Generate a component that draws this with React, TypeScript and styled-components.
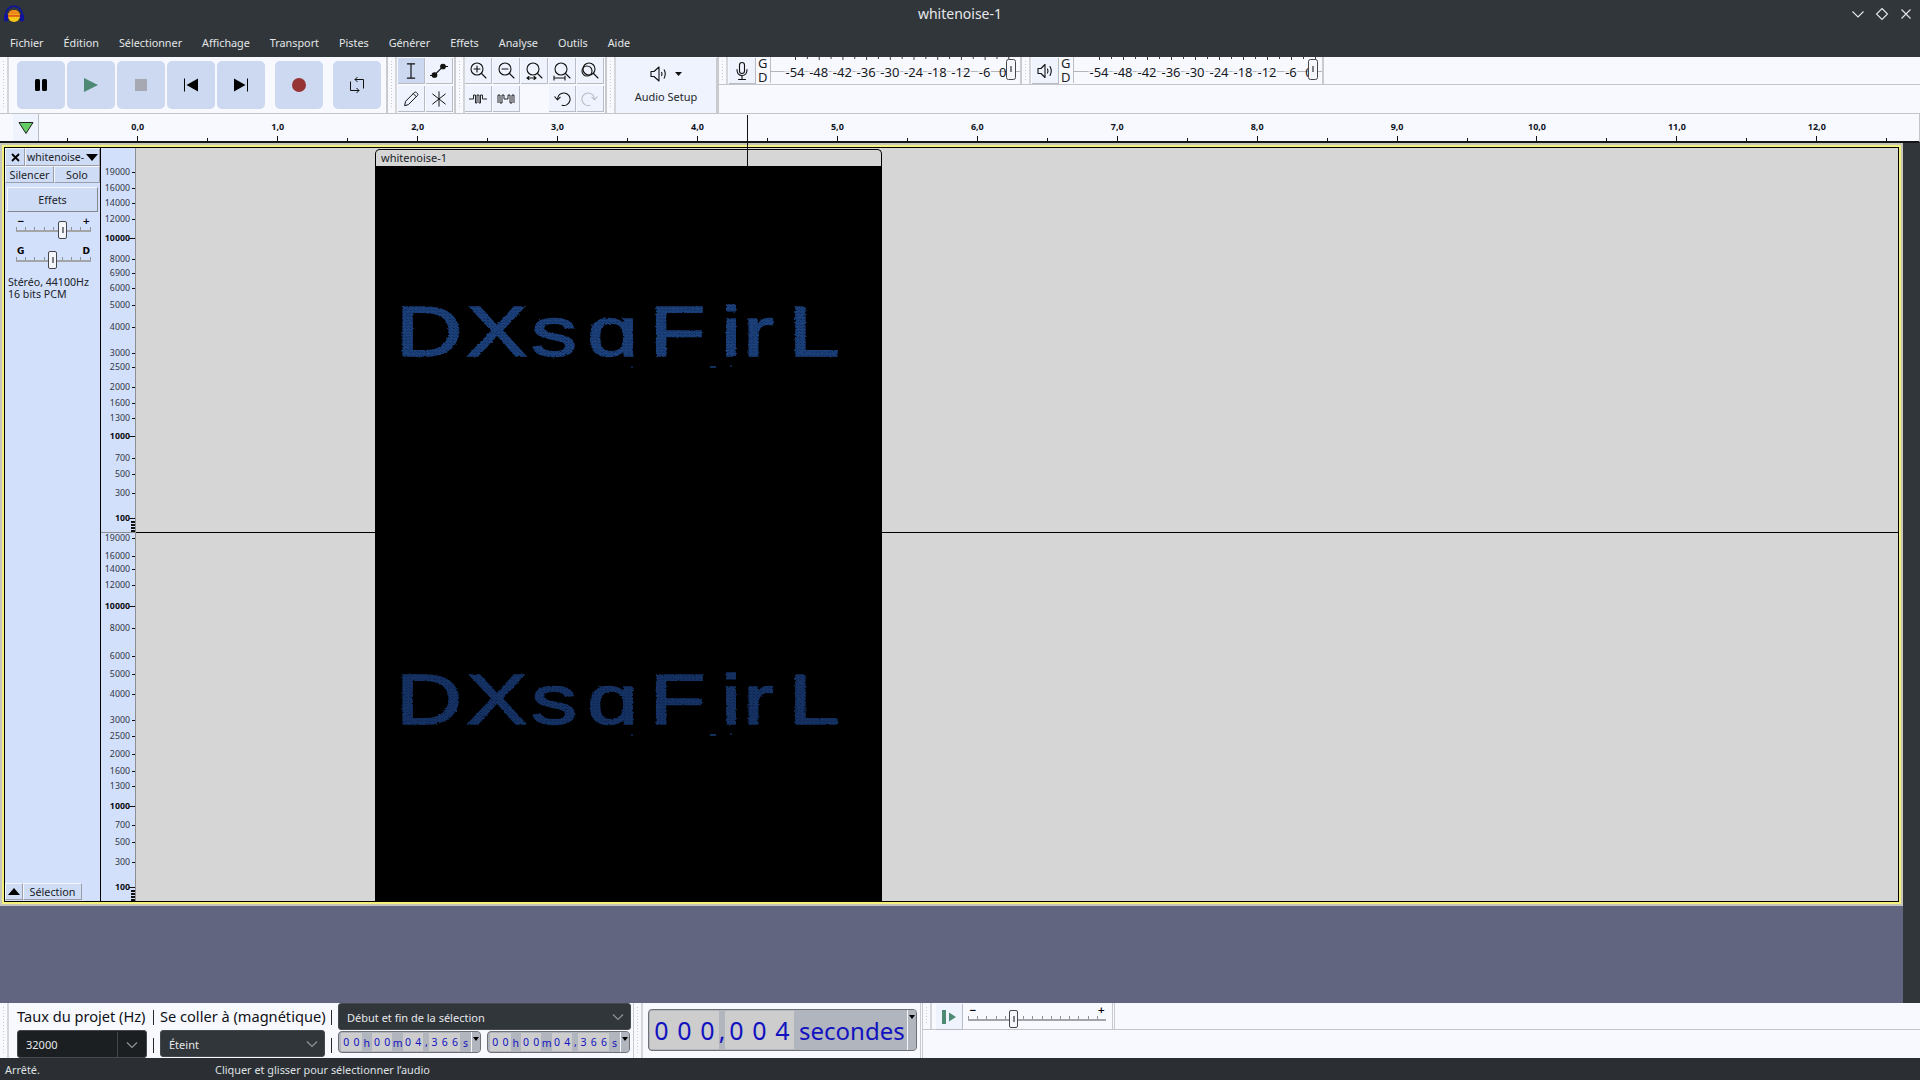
import React from 'react';
import styled, { createGlobalStyle } from 'styled-components';

const GlobalStyle = createGlobalStyle`
  html, body { margin: 0; padding: 0; background: #31363a; }
  * { box-sizing: border-box; }
  body { font-family: "Noto Sans", "Liberation Sans", sans-serif; }
`;

const Shell = styled.div`
  position: relative;
  width: 1920px;
  height: 1080px;
  display: flex;
  flex-direction: column;
  overflow: hidden;
  background: #31363a;
`;

/* ---------- title + menu ---------- */

const TitleBar = styled.div`
  height: 28px;
  display: grid;
  grid-template-columns: 1fr auto 1fr;
  align-items: center;
  padding: 0 7px 0 4px;
  color: #e6e8ea;
`;

const Title = styled.div`
  font-size: 14px;
  margin-left: 3px;
  padding-bottom: 1px;
`;

const WindowButtons = styled.div`
  display: flex;
  justify-content: flex-end;
  gap: 10px;
`;

const MenuBar = styled.div`
  height: 29px;
  display: flex;
  align-items: center;
  padding-bottom: 1px;
`;

const MenuItem = styled.span`
  padding: 0 10px;
  font-size: 10.8px;
  color: #e4e6e8;
`;

/* ---------- top toolbars ---------- */

const TopDock = styled.div`
  height: 57px;
  display: flex;
  background: #f7f9ff;
  border-bottom: 1px solid #c4c5c8;
`;

const Block = styled.div`
  display: flex;
  height: 56px;
  border-right: 2px solid #c9cacd;
  flex-shrink: 0;
`;

const Grip = styled.div`
  width: 9px;
  flex-shrink: 0;
  padding: 4px 3px 4px 3px;
  background: repeating-linear-gradient(to bottom, #c9cbd2 0 1px, transparent 1px 3px) content-box;
  border-right: 2px solid #d5d6d9;
`;

const TransportRow = styled.div`
  display: flex;
  align-items: center;
  gap: 2px;
  padding: 0 5px 0 8px;
`;

const TransportButton = styled.div<{ $gap?: boolean }>`
  width: 48px;
  height: 48px;
  margin-left: ${(p) => (p.$gap ? 8 : 0)}px;
  border-radius: 5px;
  background: #cdd9f0;
  display: flex;
  align-items: center;
  justify-content: center;
`;

const ToolGrid = styled.div<{ $cols: number }>`
  display: grid;
  grid-template-columns: repeat(${(p) => p.$cols}, 27px);
  grid-auto-rows: 26px;
  gap: 2px 1px;
  padding: 1px 1px 0 ${(p) => (p.$cols === 2 ? 1 : 0)}px;
`;

const ToolButton = styled.div<{ $active?: boolean; $empty?: boolean }>`
  display: flex;
  align-items: center;
  justify-content: center;
  padding-top: 1px;
  background: ${(p) => (p.$empty ? 'transparent' : p.$active ? '#cbd8ef' : '#eef3fd')};
  border-right: 1px solid ${(p) => (p.$empty ? 'transparent' : '#b9bcc4')};
  border-bottom: 1px solid ${(p) => (p.$empty ? 'transparent' : '#b9bcc4')};
`;

const SetupButton = styled.div`
  width: 101px;
  height: 55px;
  margin-top: 1px;
  background: #eef3fd;
  border-right: 1px solid #c9cacd;
  display: flex;
  flex-direction: column;
  align-items: center;
  gap: 5px;
  padding-top: 6px;
  font-size: 11px;
  color: #26282c;
`;

const MeterDock = styled.div`
  flex: 1;
  display: flex;
  flex-direction: column;
`;

const MeterRow = styled.div`
  height: 28px;
  display: flex;
  border-bottom: 1px solid #c4c5c8;
`;

const MeterBlock = styled.div<{ $width: number }>`
  width: ${(p) => p.$width}px;
  height: 27px;
  display: flex;
  border-right: 2px solid #c9cacd;
  flex-shrink: 0;
`;

const MeterButton = styled.div<{ $left?: number }>`
  width: 27px;
  height: 26px;
  margin: 1px 0 0 ${(p) => p.$left ?? 1}px;
  background: #eef3fd;
  border-right: 1px solid #b9bcc4;
  border-bottom: 1px solid #b9bcc4;
  display: flex;
  align-items: center;
  justify-content: center;
`;

const ChannelLetters = styled.div`
  width: 14px;
  padding-left: 2px;
  display: flex;
  flex-direction: column;
  font-size: 13px;
  line-height: 13.5px;
  color: #1c1e22;
`;

/* ---------- ruler ---------- */

const RulerBar = styled.div`
  height: 29px;
  display: flex;
  background: #f7f9ff;
  border-bottom: 2px solid #141517;
  border-right: 1px solid #c4c5c8;
  padding-left: 13px;
`;

const PlayRegionButton = styled.div`
  width: 26px;
  height: 27px;
  background: #eef3fd;
  border-right: 1px solid #b9bcc4;
  display: flex;
  align-items: center;
  justify-content: center;
`;

const PlayCursor = styled.div`
  position: absolute;
  left: 747px;
  top: 115px;
  width: 1px;
  height: 51px;
  background: #111;
  z-index: 3;
`;

/* ---------- tracks ---------- */

const Middle = styled.div`
  flex: 1;
  display: flex;
  min-height: 0;
`;

const Workspace = styled.div`
  width: 1903px;
  display: flex;
  flex-direction: column;
  background: #62657f;
`;

const FrameOuter = styled.div`
  height: 763px;
  border: 2px solid #c6c6bd;
`;

const FrameInner = styled.div`
  height: 100%;
  border: 2px solid #f4f07c;
`;

const TrackGrid = styled.div`
  height: 100%;
  display: flex;
  border: 1px solid #000;
  background: #d6d6d6;
`;

const ControlPanel = styled.div`
  width: 96px;
  flex-shrink: 0;
  display: flex;
  flex-direction: column;
  background: #d2e0fc;
  border-right: 1px solid #000;
  font-size: 10.8px;
  color: #202226;
`;

const PanelRow = styled.div`
  display: flex;
`;

const PanelCell = styled.div<{ $flex?: number; $width?: number; $height: number }>`
  ${(p) => (p.$width ? `width: ${p.$width}px;` : `flex: ${p.$flex ?? 1};`)}
  height: ${(p) => p.$height}px;
  background: #cedcf6;
  border-right: 1px solid #9b9ea6;
  border-bottom: 1px solid #9b9ea6;
  border-top: 1px solid #f3f6fd;
  border-left: 1px solid #f3f6fd;
  display: flex;
  align-items: center;
  justify-content: center;
  white-space: nowrap;
  overflow: hidden;
`;

const NameCell = styled(PanelCell)`
  justify-content: flex-start;
  padding-left: 1px;
  gap: 2px;
  font-size: 10.5px;
`;

const EffectsButton = styled.div`
  height: 25px;
  margin: 4px 2px 0 2px;
  background: #cedcf6;
  border-right: 1px solid #85878d;
  border-bottom: 1px solid #85878d;
  border-top: 1px solid #f3f6fd;
  border-left: 1px solid #f3f6fd;
  display: flex;
  align-items: center;
  justify-content: center;
`;

const SliderGroup = styled.div<{ $top: number; $width: number; $left: number }>`
  width: ${(p) => p.$width}px;
  margin: ${(p) => p.$top}px 0 0 ${(p) => p.$left}px;
  flex-shrink: 0;
`;

const SliderLabels = styled.div`
  height: 9px;
  padding: 0 1px;
  display: flex;
  justify-content: space-between;
  align-items: center;
  font-family: "DejaVu Sans", sans-serif;
  font-weight: 700;
  font-size: 9px;
  line-height: 9px;
  color: #000;
`;

const SliderBox = styled.div`
  position: relative;
  height: 18px;
  margin-top: -5px;
`;

const SliderTicks = styled.div`
  position: absolute;
  left: 0;
  right: 0;
  top: 6px;
  height: 4px;
  background: repeating-linear-gradient(to right, #8f9196 0 1px, transparent 1px 9.2px);
`;

const SliderTrack = styled.div`
  position: absolute;
  left: 0;
  right: 0;
  top: 9px;
  height: 2px;
  background: #a3a4a6;
`;

const SliderThumb = styled.div<{ $left: number }>`
  position: absolute;
  left: ${(p) => p.$left}px;
  top: 0;
  width: 9px;
  height: 18px;
  background: #f4f6fb;
  border: 1px solid #45474c;
  border-radius: 2px;
  &::after {
    content: '';
    position: absolute;
    left: 2.5px;
    top: 5px;
    width: 2px;
    height: 6px;
    background: #7f8186;
  }
`;

const TrackInfo = styled.div`
  margin: 7px 0 0 3px;
  line-height: 12px;
  font-size: 10.6px;
`;

const SelectRow = styled.div`
  margin-top: auto;
  margin-bottom: 1px;
  display: flex;
`;

const ScaleColumn = styled.div`
  width: 35px;
  flex-shrink: 0;
  background: #d2e0fc;
  border-right: 1px solid #8d8e92;
`;

const Canvas = styled.div`
  position: relative;
  flex: 1;
  padding: 1px 0 0 239px;
  background: #d6d6d6;
`;

const ChannelLine = styled.div`
  position: absolute;
  left: 0;
  right: 0;
  top: 384px;
  height: 1px;
  background: #000;
`;

const Clip = styled.div`
  width: 507px;
  height: 100%;
  display: flex;
  flex-direction: column;
`;

const ClipHeader = styled.div`
  height: 18px;
  padding: 0 0 1px 5px;
  display: flex;
  align-items: center;
  background: #d6d6d6;
  border: 1px solid #000;
  border-bottom: 0;
  border-radius: 5px 5px 0 0;
  font-size: 11px;
  color: #202226;
`;

const ClipBody = styled.div`
  flex: 1;
  background: #000;
`;

const ScrollColumn = styled.div`
  flex: 1;
  background: #31363a;
`;

/* ---------- bottom toolbars ---------- */

const BottomDock = styled.div`
  height: 55px;
  display: flex;
  background: #f7f9ff;
`;

const SelectionBlock = styled.div`
  width: 634px;
  display: flex;
  padding-right: 3px;
  border-right: 1px solid #c9cacd;
  flex-shrink: 0;
`;

const SelectionColumn = styled.div<{ $width: number; $left: number }>`
  width: ${(p) => p.$width}px;
  margin-left: ${(p) => p.$left}px;
  display: flex;
  flex-direction: column;
  flex-shrink: 0;
`;

const FieldLabel = styled.div`
  height: 27px;
  padding-bottom: 1px;
  display: flex;
  align-items: center;
  font-size: 14.6px;
  color: #101114;
  white-space: nowrap;
`;

const Dividers = styled.div`
  width: 1px;
  margin-left: 6px;
  padding: 7px 0 5px;
  display: flex;
  flex-direction: column;
  justify-content: space-between;
  flex-shrink: 0;
`;

const DividerTick = styled.div`
  height: 15px;
  background: #26282c;
`;

const Combo = styled.div<{ $dark?: boolean }>`
  height: ${(p) => (p.$dark ? 28 : 27)}px;
  display: flex;
  align-items: center;
  justify-content: space-between;
  padding: 1px ${(p) => (p.$dark ? 0 : 5)}px 0 8px;
  background: ${(p) => (p.$dark ? '#1c1f22' : '#31363a')};
  border: 1px solid #454a4f;
  border-radius: 3px;
  font-size: 11px;
  color: #e6e8ea;
`;

const ComboArrow = styled.div`
  width: 29px;
  height: 100%;
  border-left: 1px solid #43474c;
  display: flex;
  align-items: center;
  justify-content: center;
`;

const TimeFields = styled.div`
  height: 28px;
  display: flex;
  gap: 6px;
  padding-top: 1px;
`;

const TimeField = styled.div<{ $large?: boolean }>`
  position: relative;
  height: ${(p) => (p.$large ? 42 : 22)}px;
  width: ${(p) => (p.$large ? 269 : 143)}px;
  display: flex;
  align-items: stretch;
  padding: ${(p) => (p.$large ? '1px 0 1px 1px' : '1px 0 1px 2px')};
  background: #b1b5bd;
  border: 1px solid #6e7075;
  border-radius: 4px;
  color: #1212c0;
  font-size: ${(p) => (p.$large ? 25 : 10.5)}px;
  line-height: 1;
`;

const TimeCell = styled.span<{ $large?: boolean; $lit?: boolean; $width?: number; $low?: boolean }>`
  width: ${(p) => p.$width ?? (p.$large ? 23 : 10.3)}px;
  padding-top: ${(p) => (p.$low ? 3 : 0)}px;
  display: flex;
  align-items: center;
  justify-content: center;
  background: ${(p) => (p.$lit ? '#cdcdcd' : 'transparent')};
`;

const TimeUnit = styled.span`
  margin-left: 5px;
  padding-top: 1px;
  display: flex;
  align-items: center;
  font-size: 24px;
`;

const TimeDrop = styled.div`
  position: absolute;
  right: 0;
  top: 0;
  bottom: 0;
  width: 9px;
  border-left: 1px solid #f4f6fb;
  background: #b1b5bd;
  border-radius: 0 3px 3px 0;
  &::after {
    content: '';
    position: absolute;
    left: 1px;
    top: 5px;
    border-left: 3.5px solid transparent;
    border-right: 3.5px solid transparent;
    border-top: 4px solid #000;
  }
`;

const TimeBlock = styled.div`
  width: 289px;
  display: flex;
  flex-shrink: 0;
  border-right: 3px double #c9cacd;
`;

const BigTimeWrap = styled.div`
  padding: 6px 0 0 5px;
`;

const SpeedDock = styled.div`
  flex: 1;
  display: flex;
  flex-direction: column;
`;

const SpeedRow = styled.div`
  height: 27px;
  display: flex;
  border-bottom: 1px solid #c4c5c8;
`;

const SpeedBlock = styled.div`
  width: 192px;
  display: flex;
  flex-shrink: 0;
  border-right: 3px double #c9cacd;
`;

const SpeedSlider = styled.div`
  padding: 3px 0 0 5px;
`;

const StatusBar = styled.div`
  height: 22px;
  display: flex;
  align-items: center;
  padding-top: 1px;
  background: #2b2e33;
  color: #dfe1e3;
  font-size: 10.9px;
`;

const StatusLeft = styled.div`
  width: 215px;
  padding-left: 5px;
`;

/* ---------- drawings ---------- */

const Stroke = ({ size = 20, sw = 1.3, color = '#111', children }: { size?: number; sw?: number; color?: string; children: React.ReactNode }) => (
  <svg width={size} height={size} viewBox="0 0 20 20" fill="none" stroke={color} strokeWidth={sw} strokeLinecap="round" strokeLinejoin="round">
    {children}
  </svg>
);

const Logo = () => (
  <svg width="20" height="18" viewBox="0 0 20 18">
    <path d="M1.5 12 C1.5 -2.5 18.5 -2.5 18.5 12" fill="none" stroke="#10149c" strokeWidth="1.7" />
    <rect x="0" y="9" width="4" height="7.5" rx="1.8" fill="#10149c" />
    <rect x="16" y="9" width="4" height="7.5" rx="1.8" fill="#10149c" />
    <circle cx="10" cy="11" r="6" fill="#f5c518" />
    <path d="M4.2 9.5 A6 6 0 0 1 15.8 9.5 Z" fill="#ee8a1c" />
    <rect x="4" y="10.3" width="12" height="1.3" fill="#d8301c" />
  </svg>
);

const SpeakerIcon = ({ size = 20 }: { size?: number }) => (
  <Stroke size={size} sw={1.1}>
    <path d="M3 7.5 H6 L10 3.5 V16.5 L6 12.5 H3 Z" />
    <path d="M12.5 8 Q13.5 10 12.5 12" />
    <path d="M15 5.5 Q17.5 10 15 14.5" />
  </Stroke>
);

const ZoomGlass = ({ children }: { children?: React.ReactNode }) => (
  <Stroke size={20} sw={1.1}>
    <circle cx="9" cy="8" r="6" />
    <path d="M13.5 12.5 L18 17" />
    {children}
  </Stroke>
);

const RulerSvg = () => {
  const marks = Array.from({ length: 27 }, (_, i) => i - 1);
  return (
    <svg width="1880" height="27" style={{ display: 'block' }}>
      {marks.map((m) => {
        const x = 98.3 + m * 69.96;
        const major = m % 2 === 0;
        return (
          <g key={m}>
            <rect x={Math.round(x)} y={major ? 22 : 24} width="1" height={major ? 5 : 3} fill="#111" />
            {major && (
              <text x={x + 0.5} y="16" textAnchor="middle" fontSize="9" fontWeight="700" fontFamily="Noto Sans" fill="#10131c">
                {`${m / 2},0`}
              </text>
            )}
          </g>
        );
      })}
    </svg>
  );
};

const Meter = ({ width, start, step }: { width: number; start: number; step: number }) => {
  const labels = ['-54', '-48', '-42', '-36', '-30', '-24', '-18', '-12', '-6'];
  return (
    <svg width={width} height="27" style={{ display: 'block', flexShrink: 0 }}>
      <rect x="0" y="0" width="1" height="26" fill="#bcbdc0" />
      <rect x="0" y="14" width={width} height="1" fill="#b4b5b8" />
      {Array.from({ length: 19 }, (_, i) => (
        <rect key={i} x={start + (i * step) / 2} y="0" width="1" height={i % 2 ? 2 : 3} fill="#3a3c40" />
      ))}
      {labels.map((l, i) => (
        <text
          key={l}
          x={start + i * step}
          y="20"
          textAnchor="middle"
          fontSize="13"
          fontFamily="Noto Sans"
          fill="#16181c"
          stroke="#f7f9ff"
          strokeWidth="3"
          paintOrder="stroke"
        >
          {l}
        </text>
      ))}
      <text x={start + 8 * step + 18} y="20" textAnchor="middle" fontSize="13" fontFamily="Noto Sans" fill="#16181c">
        0
      </text>
      <rect x={width - 13.5} y="2.5" width="9" height="20" rx="2" fill="#f4f6fb" stroke="#45474c" />
      <rect x={width - 10} y="9" width="2" height="6" fill="#7f8186" />
    </svg>
  );
};

const scaleTop: [string, number][] = [
  ['19000', 172], ['16000', 188], ['14000', 203], ['12000', 219], ['10000', 238], ['8000', 259], ['6900', 273],
  ['6000', 288], ['5000', 305], ['4000', 327], ['3000', 353], ['2500', 367], ['2000', 387], ['1600', 403],
  ['1300', 418], ['1000', 436], ['700', 458], ['500', 474], ['300', 493], ['100', 518],
];

const scaleBottom: [string, number][] = [
  ['19000', 538], ['16000', 556], ['14000', 569], ['12000', 585], ['10000', 606], ['8000', 628], ['6000', 656],
  ['5000', 674], ['4000', 694], ['3000', 720], ['2500', 736], ['2000', 754], ['1600', 771], ['1300', 786],
  ['1000', 806], ['700', 825], ['500', 842], ['300', 862], ['100', 887],
];

const FrequencyScale = () => {
  const y0 = 148;
  const dense = (base: number) => [3, 6, 9, 12].map((d) => base + d);
  const bold = (l: string) => l === '10000' || l === '1000' || l === '100';
  return (
    <svg width="34" height="753" style={{ display: 'block' }}>
      {[...scaleTop, ...scaleBottom].map(([label, y], i) => (
        <g key={i}>
          <text
            x="29"
            y={y - y0 + 3}
            textAnchor="end"
            fontSize="8.8"
            fontWeight={bold(label) ? 700 : 400}
            fontFamily="Noto Sans"
            fill={bold(label) ? '#0c0d10' : '#33363f'}
          >
            {label}
          </text>
          <rect x={bold(label) ? 28 : 31} y={y - y0} width={bold(label) ? 6 : 3} height="1" fill="#111" />
        </g>
      ))}
      {[518, 887].flatMap((b) => dense(b)).map((y) => (
        <rect key={y} x="30" y={y - y0} width="4" height="2" fill="#111" />
      ))}
      <rect x="0" y={532 - y0} width="34" height="1" fill="#8d8e92" />
    </svg>
  );
};

const Spectrogram = () => {
  // letter x positions are in the stretched coordinate space (÷1.3)
  const xs = [16, 70, 120, 163, 211, 266, 283, 318].join(' ');
  return (
    <svg width="505" height="735" style={{ display: 'block' }}>
      <defs>
        <pattern id="ditherA" width="3" height="3" patternUnits="userSpaceOnUse">
          <rect width="3" height="3" fill="#1b3f7a" />
          <rect x="0" y="0" width="1" height="1" fill="#0f2a5c" />
          <rect x="2" y="2" width="1" height="1" fill="#12305f" />
        </pattern>
        <pattern id="ditherB" width="3" height="3" patternUnits="userSpaceOnUse">
          <rect width="3" height="3" fill="#153363" />
          <rect x="0" y="0" width="1" height="1" fill="#0b2150" />
          <rect x="2" y="2" width="1" height="1" fill="#0e2757" />
        </pattern>
        <filter id="rough" x="-2%" y="-5%" width="104%" height="110%">
          <feTurbulence type="fractalNoise" baseFrequency="0.5" numOctaves="1" seed="4" />
          <feDisplacementMap in="SourceGraphic" scale="2.5" />
        </filter>
      </defs>
      {[
        { base: 190, fill: 'url(#ditherA)' },
        { base: 558, fill: 'url(#ditherB)' },
      ].map(({ base, fill }) => (
        <g key={base}>
          <g transform="scale(1.3 1)" filter="url(#rough)">
            <text x={xs} y={base} fontSize="71" fontFamily="Liberation Sans, DejaVu Sans, sans-serif" fill={fill} stroke={fill} strokeWidth="1.4">
              DXsɑFirL
            </text>
          </g>
          <rect x="256" y={base + 10} width="2" height="2" fill="#0d2246" />
          <rect x="335" y={base + 10} width="6" height="2" fill="#12305f" />
          <rect x="355" y={base + 9} width="2" height="2" fill="#0d2246" />
        </g>
      ))}
    </svg>
  );
};

const Slider = ({ width, thumb, left, top, labels }: { width: number; thumb: number; left: number; top: number; labels: [string, string] }) => (
  <SliderGroup $top={top} $width={width} $left={left}>
    <SliderLabels>
      <span>{labels[0]}</span>
      <span>{labels[1]}</span>
    </SliderLabels>
    <SliderBox>
      <SliderTicks />
      <SliderTrack />
      <SliderThumb $left={thumb} />
    </SliderBox>
  </SliderGroup>
);

const SmallTime = () => (
  <TimeField>
    {'00h00m04,366s'.split('').map((c, i) => (
      <TimeCell key={i} $lit={/\d/.test(c)} $low={/[hms]/.test(c)} $width={c === ',' ? 6 : undefined}>
        {c}
      </TimeCell>
    ))}
    <TimeDrop />
  </TimeField>
);

const menus = ['Fichier', 'Édition', 'Sélectionner', 'Affichage', 'Transport', 'Pistes', 'Générer', 'Effets', 'Analyse', 'Outils', 'Aide'];

const Chevron = ({ color = '#8f9499' }: { color?: string }) => (
  <svg width="14" height="14" viewBox="0 0 14 14" fill="none" stroke={color} strokeWidth="1.2">
    <path d="M2 4.5 L7 9.5 L12 4.5" />
  </svg>
);

export default function App() {
  return (
    <Shell>
      <GlobalStyle />
      <TitleBar>
        <Logo />
        <Title>whitenoise-1</Title>
        <WindowButtons>
          <svg width="14" height="14" viewBox="0 0 14 14" fill="none" stroke="#e6e8ea" strokeWidth="1.1">
            <path d="M1.5 4.5 L7 10 L12.5 4.5" />
          </svg>
          <svg width="14" height="14" viewBox="0 0 14 14" fill="none" stroke="#e6e8ea" strokeWidth="1.1">
            <path d="M7 1.5 L12.5 7 L7 12.5 L1.5 7 Z" />
          </svg>
          <svg width="14" height="14" viewBox="0 0 14 14" fill="none" stroke="#e6e8ea" strokeWidth="1.1">
            <path d="M2.5 2.5 L11.5 11.5 M11.5 2.5 L2.5 11.5" />
          </svg>
        </WindowButtons>
      </TitleBar>
      <MenuBar>
        {menus.map((m) => (
          <MenuItem key={m}>{m}</MenuItem>
        ))}
      </MenuBar>

      <TopDock>
        <Block>
          <Grip />
          <TransportRow>
            <TransportButton>
              <svg width="14" height="14" viewBox="0 0 14 14">
                <rect x="1" y="1" width="5" height="12" rx="1.5" fill="#000" />
                <rect x="8" y="1" width="5" height="12" rx="1.5" fill="#000" />
              </svg>
            </TransportButton>
            <TransportButton>
              <svg width="16" height="16" viewBox="0 0 16 16">
                <path d="M1 1 L15 8 L1 15 Z" fill="#4e8a73" />
              </svg>
            </TransportButton>
            <TransportButton>
              <svg width="12" height="12" viewBox="0 0 12 12">
                <rect width="12" height="12" fill="#a6a9b2" />
              </svg>
            </TransportButton>
            <TransportButton>
              <svg width="16" height="14" viewBox="0 0 16 14">
                <rect x="1" y="0.5" width="1" height="13" fill="#000" />
                <path d="M15 0.5 V13.5 L3.5 7 Z" fill="#000" />
              </svg>
            </TransportButton>
            <TransportButton>
              <svg width="16" height="14" viewBox="0 0 16 14">
                <rect x="14" y="0.5" width="1" height="13" fill="#000" />
                <path d="M1 0.5 V13.5 L12.5 7 Z" fill="#000" />
              </svg>
            </TransportButton>
            <TransportButton $gap>
              <svg width="16" height="16" viewBox="0 0 16 16">
                <circle cx="8" cy="8" r="7" fill="#963333" />
              </svg>
            </TransportButton>
            <TransportButton $gap>
              <svg width="16" height="18" viewBox="0 0 16 18" fill="none" stroke="#111" strokeWidth="1">
                <path d="M6 3.5 H14.5 V12.5 M10 14.5 H1.5 V5.5" />
                <path d="M8.5 1 L6 3.5 L8.5 6 M7.5 12 L10 14.5 L7.5 17" />
              </svg>
            </TransportButton>
          </TransportRow>
        </Block>

        <Block>
          <Grip />
          <ToolGrid $cols={2}>
            <ToolButton $active>
              <Stroke size={18}>
                <path d="M6 2 H14 M6 18 H14 M10 2 V18" />
              </Stroke>
            </ToolButton>
            <ToolButton>
              <svg width="20" height="18" viewBox="0 0 20 18" fill="#111" stroke="#111" strokeWidth="1.1">
                <path d="M1 13.5 H5 L14 4.5 H19" fill="none" />
                <circle cx="14" cy="4.5" r="2.3" />
                <circle cx="5.5" cy="13" r="2.3" />
              </svg>
            </ToolButton>
            <ToolButton>
              <Stroke size={18} sw={1.1}>
                <path d="M3 17 L4 12.5 L14 2.5 Q15 1.8 16 2.8 L17.2 4 Q18 5 17.3 6 L7.3 16 Z" />
                <path d="M12.5 4 L16 7.5" />
              </Stroke>
            </ToolButton>
            <ToolButton>
              <Stroke size={18} sw={1.1}>
                <path d="M10 2 V18 M3 4.5 L17 15.5 M17 4.5 L3 15.5" />
              </Stroke>
            </ToolButton>
          </ToolGrid>
        </Block>

        <Block>
          <Grip />
          <ToolGrid $cols={5}>
            <ToolButton>
              <ZoomGlass>
                <path d="M6 8 H12 M9 5 V11" />
              </ZoomGlass>
            </ToolButton>
            <ToolButton>
              <ZoomGlass>
                <path d="M6 8 H12" />
              </ZoomGlass>
            </ToolButton>
            <ToolButton>
              <ZoomGlass>
                <path d="M3 17 H12 M5 15.5 L3 17 L5 18.5 M10 15.5 L12 17 L10 18.5" />
              </ZoomGlass>
            </ToolButton>
            <ToolButton>
              <ZoomGlass>
                <path d="M2 17 H13 M2 15 V19 M13 15 V19" />
              </ZoomGlass>
            </ToolButton>
            <ToolButton>
              <ZoomGlass>
                <circle cx="7" cy="10" r="5" />
              </ZoomGlass>
            </ToolButton>
            <ToolButton>
              <svg width="18" height="14" viewBox="0 0 18 14" fill="none" stroke="#111" strokeWidth="0.9" strokeLinejoin="round">
                <path d="M0 7 H4.5 M13.5 7 H18" />
                <path d="M4.5 7 V3 H6.5 V11 H8 V3 H10 V11 H11.5 V3 H13.5 V7" />
              </svg>
            </ToolButton>
            <ToolButton>
              <svg width="18" height="14" viewBox="0 0 18 14" fill="none" stroke="#111" strokeWidth="0.9" strokeLinejoin="round">
                <path d="M1 11 V3 H3 V11 H5 V3 H7 V7 H11 V3 H13 V11 H15 V3 H17 V11" />
              </svg>
            </ToolButton>
            <ToolButton $empty />
            <ToolButton>
              <Stroke size={18} sw={1.2}>
                <path d="M5 10.5 A7 7 0 1 1 10 17" />
                <path d="M2 7.5 L5 11 L8 8" />
              </Stroke>
            </ToolButton>
            <ToolButton>
              <Stroke size={18} sw={1.2} color="#b9bcc4">
                <path d="M15 10.5 A7 7 0 1 0 10 17" />
                <path d="M18 7.5 L15 11 L12 8" />
              </Stroke>
            </ToolButton>
          </ToolGrid>
        </Block>

        <Block>
          <Grip />
          <SetupButton>
            <svg width="34" height="20" viewBox="0 0 34 20">
              <g fill="none" stroke="#111" strokeWidth="1.1" strokeLinejoin="round">
                <path d="M2 7.5 H5 L10 3 V17 L5 12.5 H2 Z" />
                <path d="M12.5 8 Q13.5 10 12.5 12" />
                <path d="M15 5.5 Q17.5 10 15 14.5" />
              </g>
              <path d="M26 8 H33 L29.5 12 Z" fill="#111" />
            </svg>
            Audio Setup
          </SetupButton>
        </Block>

        <MeterDock>
          <MeterRow>
            <MeterBlock $width={303}>
              <Grip />
              <MeterButton>
                <Stroke size={20} sw={1.1}>
                  <rect x="7.5" y="1.5" width="5" height="11" rx="2.5" />
                  <path d="M5 8.5 Q5 14.5 10 14.5 Q15 14.5 15 8.5 M10 14.5 V18 M6.5 18.5 H13.5" />
                </Stroke>
              </MeterButton>
              <ChannelLetters>
                <span>G</span>
                <span>D</span>
              </ChannelLetters>
              <Meter width={250} start={25} step={23.7} />
            </MeterBlock>
            <MeterBlock $width={302}>
              <Grip />
              <MeterButton>
                <SpeakerIcon />
              </MeterButton>
              <ChannelLetters>
                <span>G</span>
                <span>D</span>
              </ChannelLetters>
              <Meter width={249} start={26} step={24} />
            </MeterBlock>
          </MeterRow>
        </MeterDock>
      </TopDock>

      <RulerBar>
        <PlayRegionButton>
          <svg width="16" height="14" viewBox="0 0 16 14">
            <path d="M1 1.5 H15 L8 12.5 Z" fill="#66cc66" stroke="#222" strokeWidth="1" />
          </svg>
        </PlayRegionButton>
        <RulerSvg />
      </RulerBar>
      <PlayCursor />

      <Middle>
        <Workspace>
          <FrameOuter>
            <FrameInner>
              <TrackGrid>
                <ControlPanel>
                  <PanelRow>
                    <PanelCell $width={20} $height={18}>
                      <svg width="9" height="9" viewBox="0 0 9 9" stroke="#000" strokeWidth="1.8">
                        <path d="M1 1 L8 8 M8 1 L1 8" />
                      </svg>
                    </PanelCell>
                    <NameCell $flex={1} $height={18}>
                      whitenoise-
                      <svg width="12" height="7" viewBox="0 0 12 7">
                        <path d="M0 0 H12 L6 7 Z" fill="#000" />
                      </svg>
                    </NameCell>
                  </PanelRow>
                  <PanelRow>
                    <PanelCell $width={49} $height={17}>
                      Silencer
                    </PanelCell>
                    <PanelCell $flex={1} $height={17}>
                      Solo
                    </PanelCell>
                  </PanelRow>
                  <EffectsButton>Effets</EffectsButton>
                  <Slider width={75} thumb={42} left={11} top={5} labels={['−', '+']} />
                  <Slider width={75} thumb={32} left={11} top={8} labels={['G', 'D']} />
                  <TrackInfo>
                    Stéréo, 44100Hz
                    <br />
                    16 bits PCM
                  </TrackInfo>
                  <SelectRow>
                    <PanelCell $width={18} $height={17}>
                      <svg width="12" height="7" viewBox="0 0 12 7">
                        <path d="M6 0 L12 7 H0 Z" fill="#000" />
                      </svg>
                    </PanelCell>
                    <PanelCell $width={59} $height={17}>
                      Sélection
                    </PanelCell>
                  </SelectRow>
                </ControlPanel>
                <ScaleColumn>
                  <FrequencyScale />
                </ScaleColumn>
                <Canvas>
                  <Clip>
                    <ClipHeader>whitenoise-1</ClipHeader>
                    <ClipBody>
                      <Spectrogram />
                    </ClipBody>
                  </Clip>
                  <ChannelLine />
                </Canvas>
              </TrackGrid>
            </FrameInner>
          </FrameOuter>
        </Workspace>
        <ScrollColumn />
      </Middle>

      <BottomDock>
        <SelectionBlock>
          <Grip />
          <SelectionColumn $width={130} $left={8}>
            <FieldLabel>Taux du projet (Hz)</FieldLabel>
            <Combo $dark>
              32000
              <ComboArrow>
                <Chevron />
              </ComboArrow>
            </Combo>
          </SelectionColumn>
          <Dividers>
            <DividerTick />
            <DividerTick />
          </Dividers>
          <SelectionColumn $width={165} $left={6}>
            <FieldLabel>Se coller à (magnétique)</FieldLabel>
            <Combo>
              Éteint
              <Chevron />
            </Combo>
          </SelectionColumn>
          <Dividers>
            <DividerTick />
            <DividerTick />
          </Dividers>
          <SelectionColumn $width={293} $left={6}>
            <Combo>
              Début et fin de la sélection
              <Chevron />
            </Combo>
            <TimeFields>
              <SmallTime />
              <SmallTime />
            </TimeFields>
          </SelectionColumn>
        </SelectionBlock>
        <TimeBlock>
          <Grip />
          <BigTimeWrap>
            <TimeField $large>
              {'000'.split('').map((c, i) => (
                <TimeCell key={i} $large $lit>
                  {c}
                </TimeCell>
              ))}
              <TimeCell $width={6}>,</TimeCell>
              {'004'.split('').map((c, i) => (
                <TimeCell key={i} $large $lit>
                  {c}
                </TimeCell>
              ))}
              <TimeUnit>secondes</TimeUnit>
              <TimeDrop />
            </TimeField>
          </BigTimeWrap>
        </TimeBlock>
        <SpeedDock>
          <SpeedRow>
            <SpeedBlock>
              <Grip />
              <MeterButton $left={4}>
                <svg width="16" height="16" viewBox="0 0 16 16" fill="#4e8a73">
                  <rect x="1" y="1" width="4" height="14" />
                  <path d="M8 3.5 L15 8 L8 12.5 Z" />
                </svg>
              </MeterButton>
              <SpeedSlider>
                <Slider width={138} thumb={41} left={0} top={0} labels={['−', '+']} />
              </SpeedSlider>
            </SpeedBlock>
          </SpeedRow>
        </SpeedDock>
      </BottomDock>

      <StatusBar>
        <StatusLeft>Arrêté.</StatusLeft>
        Cliquer et glisser pour sélectionner l’audio
      </StatusBar>
    </Shell>
  );
}
